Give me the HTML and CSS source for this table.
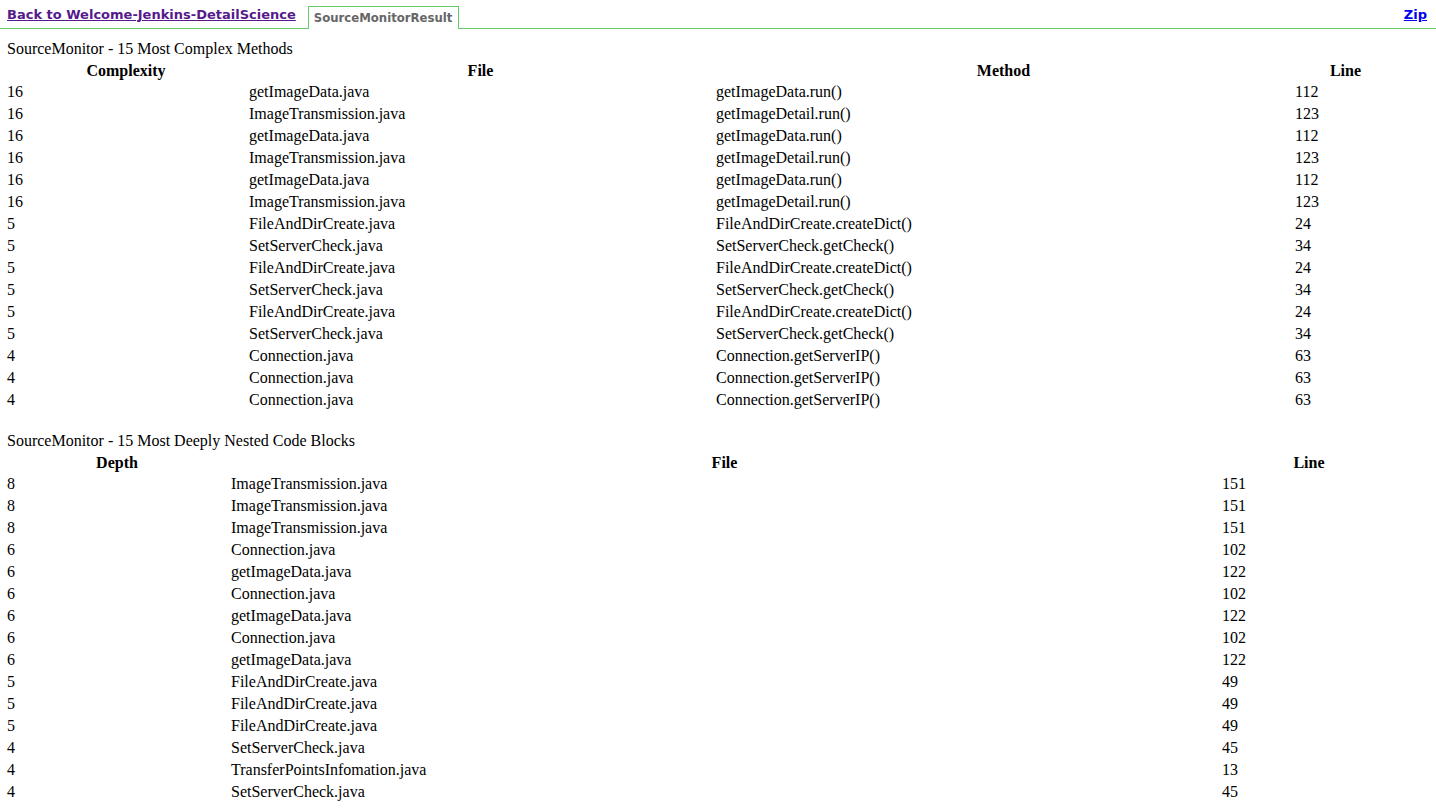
FILE: index.html
```html
<!DOCTYPE html>
<html lang="en">

<head>
    <meta charset="UTF-8">
    <title>SourceMonitorResult</title>
    <link rel="stylesheet" href="styles.css">
</head>

<body>
    <!-- Tab bar -->
    <div class="tabbar">
        <a class="back-link" href="#">Back to Welcome-Jenkins-DetailScience</a>
        <span class="tab">SourceMonitorResult</span>
        <a class="zip-link" href="#">Zip</a>
    </div>

    <div class="report">
        <div class="caption">SourceMonitor - 15 Most Complex Methods</div>
        <table class="result complex">
            <colgroup>
                <col class="c-complexity">
                <col class="c-file">
                <col class="c-method">
                <col class="c-line">
            </colgroup>
            <tr><th>Complexity</th><th>File</th><th>Method</th><th>Line</th></tr>
            <tr><td>16</td><td>getImageData.java</td><td>getImageData.run()</td><td>112</td></tr>
            <tr><td>16</td><td>ImageTransmission.java</td><td>getImageDetail.run()</td><td>123</td></tr>
            <tr><td>16</td><td>getImageData.java</td><td>getImageData.run()</td><td>112</td></tr>
            <tr><td>16</td><td>ImageTransmission.java</td><td>getImageDetail.run()</td><td>123</td></tr>
            <tr><td>16</td><td>getImageData.java</td><td>getImageData.run()</td><td>112</td></tr>
            <tr><td>16</td><td>ImageTransmission.java</td><td>getImageDetail.run()</td><td>123</td></tr>
            <tr><td>5</td><td>FileAndDirCreate.java</td><td>FileAndDirCreate.createDict()</td><td>24</td></tr>
            <tr><td>5</td><td>SetServerCheck.java</td><td>SetServerCheck.getCheck()</td><td>34</td></tr>
            <tr><td>5</td><td>FileAndDirCreate.java</td><td>FileAndDirCreate.createDict()</td><td>24</td></tr>
            <tr><td>5</td><td>SetServerCheck.java</td><td>SetServerCheck.getCheck()</td><td>34</td></tr>
            <tr><td>5</td><td>FileAndDirCreate.java</td><td>FileAndDirCreate.createDict()</td><td>24</td></tr>
            <tr><td>5</td><td>SetServerCheck.java</td><td>SetServerCheck.getCheck()</td><td>34</td></tr>
            <tr><td>4</td><td>Connection.java</td><td>Connection.getServerIP()</td><td>63</td></tr>
            <tr><td>4</td><td>Connection.java</td><td>Connection.getServerIP()</td><td>63</td></tr>
            <tr><td>4</td><td>Connection.java</td><td>Connection.getServerIP()</td><td>63</td></tr>
        </table>

        <div class="caption second">SourceMonitor - 15 Most Deeply Nested Code Blocks</div>
        <table class="result nested">
            <colgroup>
                <col class="c-depth">
                <col class="c-nfile">
                <col class="c-nline">
            </colgroup>
            <tr><th>Depth</th><th>File</th><th>Line</th></tr>
            <tr><td>8</td><td>ImageTransmission.java</td><td>151</td></tr>
            <tr><td>8</td><td>ImageTransmission.java</td><td>151</td></tr>
            <tr><td>8</td><td>ImageTransmission.java</td><td>151</td></tr>
            <tr><td>6</td><td>Connection.java</td><td>102</td></tr>
            <tr><td>6</td><td>getImageData.java</td><td>122</td></tr>
            <tr><td>6</td><td>Connection.java</td><td>102</td></tr>
            <tr><td>6</td><td>getImageData.java</td><td>122</td></tr>
            <tr><td>6</td><td>Connection.java</td><td>102</td></tr>
            <tr><td>6</td><td>getImageData.java</td><td>122</td></tr>
            <tr><td>5</td><td>FileAndDirCreate.java</td><td>49</td></tr>
            <tr><td>5</td><td>FileAndDirCreate.java</td><td>49</td></tr>
            <tr><td>5</td><td>FileAndDirCreate.java</td><td>49</td></tr>
            <tr><td>4</td><td>SetServerCheck.java</td><td>45</td></tr>
            <tr><td>4</td><td>TransferPointsInfomation.java</td><td>13</td></tr>
            <tr><td>4</td><td>SetServerCheck.java</td><td>45</td></tr>
        </table>
    </div>
</body>

</html>
```

FILE: styles.css
```css
/* Page */
body {
    margin: 0;
    font-family: "Liberation Serif", "Times New Roman", serif;
    font-size: 16px;
    color: #000;
    background-color: #fff;
}

/* Tab bar */
.tabbar {
    display: flex;
    align-items: flex-end;
    height: 28px;
    padding: 0 7px;
    border-bottom: 1px solid #66cc66;
    font-family: "DejaVu Sans", Verdana, sans-serif;
    font-size: 13px;
    font-weight: bold;
}

.tabbar .back-link {
    color: #551a8b;
    line-height: 16px;
    margin-bottom: 5px;
}

.tabbar .tab {
    margin-left: 12px;
    margin-bottom: -1px;
    height: 23px;
    box-sizing: border-box;
    padding: 3px 6px 0 5px;
    border: 1px solid #66cc66;
    border-bottom: none;
    background-color: #fff;
    color: #666;
    font-size: 11.7px;
    line-height: 16px;
}

.tabbar .zip-link {
    margin-left: auto;
    margin-right: 2px;
    color: #0000ee;
    line-height: 16px;
    margin-bottom: 5px;
}

/* Report */
.report {
    padding: 11px 0 0 4px;
}

.caption {
    padding-left: 3px;
    line-height: 18px;
}

.caption.second {
    margin-top: 20px;
}

.result {
    border-spacing: 2px;
    table-layout: fixed;
    width: 1395px;
}

.result th,
.result td {
    padding: 1px;
    line-height: 18px;
    text-align: left;
    white-space: nowrap;
}

.result th {
    padding: 2px 1px 0 1px;
    text-align: center;
}

.c-complexity { width: 240px; }
.c-file { width: 465px; }
.c-method { width: 577px; }
.c-line { width: 103px; }

.c-depth { width: 222px; }
.c-nfile { width: 989px; }
.c-nline { width: 176px; }
```
